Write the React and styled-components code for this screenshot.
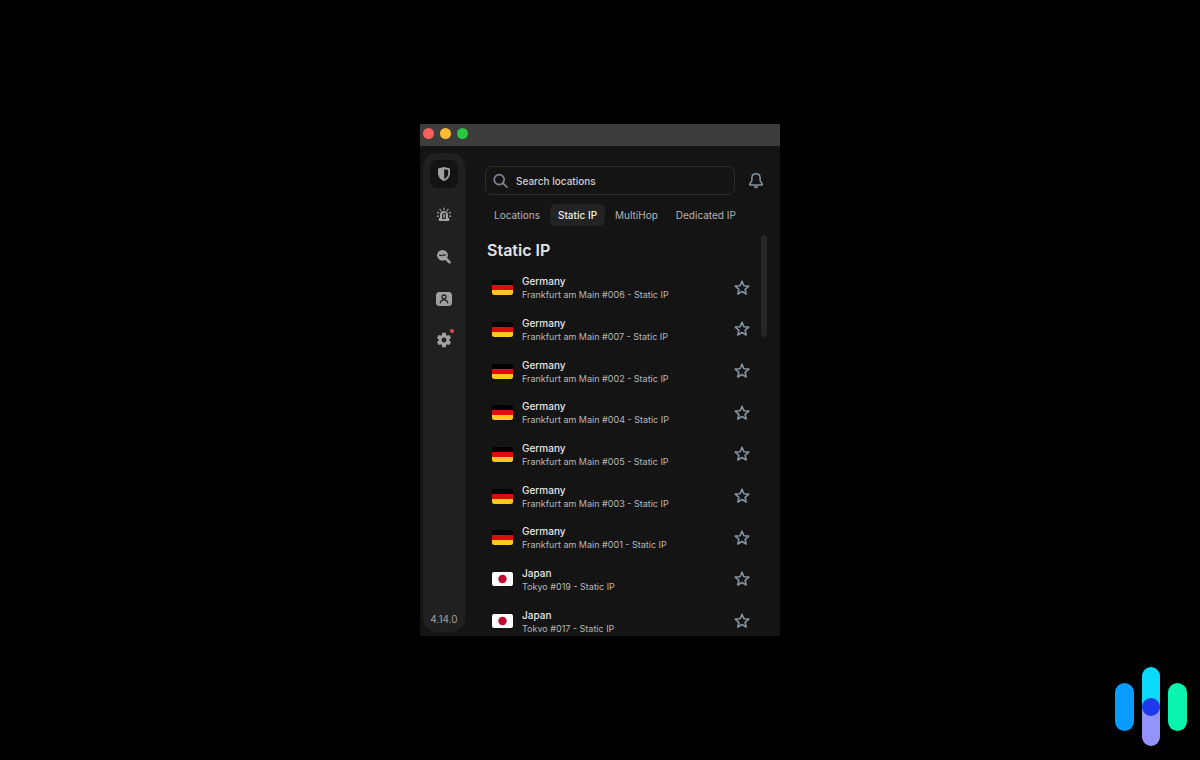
import React from "react";
import styled, { createGlobalStyle } from "styled-components";

const GlobalStyle = createGlobalStyle`
  *, *::before, *::after { box-sizing: border-box; }
  body {
    margin: 0;
    background: #000;
    color: #e4e4e7;
    font-family: Inter, "Liberation Sans", sans-serif;
    font-size: 10px;
  }
  button, input { font: inherit; color: inherit; }
  button { border: 0; padding: 0; background: none; cursor: pointer; }
`;

const Page = styled.div`
  display: grid;
  place-items: center;
  min-height: 100vh;
`;

const AppWindow = styled.div`
  display: flex;
  flex-direction: column;
  width: min(360px, 100%);
  height: min(512px, 100vh);
  background: #141414;
  overflow: hidden;
`;

const TitleBar = styled.header`
  display: flex;
  flex: none;
  gap: 6px;
  height: 22px;
  padding: 4px 3px;
  background: #3d3d3b;
`;

const WindowControl = styled.button`
  width: 11px;
  height: 11px;
  border-radius: 50%;
  background: ${(p) => p.$color};
`;

const Body = styled.div`
  display: flex;
  flex: 1;
  min-height: 0;
  padding-left: 3px;
`;

const Sidebar = styled.aside`
  display: flex;
  flex-direction: column;
  justify-content: space-between;
  align-items: center;
  width: 42px;
  margin: 7px 0 4px;
  border-radius: 14px;
  background: #202020;
`;

const SideNav = styled.nav`
  display: grid;
  grid-auto-rows: 1fr;
  place-items: center;
  height: 208px;
`;

const SideButton = styled.button`
  position: relative;
  display: grid;
  place-items: center;
  width: 28px;
  height: 28px;
  border-radius: 7px;
  background: ${(p) => (p.$active ? "#131313" : "transparent")};
  color: #a1a1a1;
`;

const Dot = styled.span`
  position: absolute;
  top: 3px;
  right: 4px;
  width: 4px;
  height: 4px;
  border-radius: 50%;
  background: #e5484d;
`;

const Version = styled.span`
  color: #a0a0a0;
  line-height: 14px;
  padding-bottom: 6px;
`;

const Main = styled.main`
  position: relative;
  display: flex;
  flex: 1;
  flex-direction: column;
  min-width: 0;
  padding: 20px 15px 4px 20px;
`;

const SearchRow = styled.div`
  display: flex;
  gap: 12px;
  align-items: center;
`;

const SearchBox = styled.label`
  display: flex;
  flex: 1;
  align-items: center;
  gap: 8px;
  height: 29px;
  padding: 0 7px;
  border: 1px solid #2b2b2b;
  border-radius: 7px;
  color: #84868f;
`;

const SearchInput = styled.input`
  flex: 1;
  min-width: 0;
  padding: 0;
  border: 0;
  outline: 0;
  background: none;
  font-weight: 500;
  &::placeholder { color: #cfcfcf; opacity: 1; }
`;

const IconButton = styled.button`
  display: grid;
  place-items: center;
  width: 18px;
  height: 18px;
  color: #8394a0;
`;

const Tabs = styled.div`
  display: flex;
  gap: 2px;
  margin: 9px 0 0 1px;
`;

const Tab = styled.button`
  height: 22px;
  padding: 0 8px;
  border-radius: 6px;
  white-space: nowrap;
  background: ${(p) => (p.$active ? "#232323" : "transparent")};
  color: ${(p) => (p.$active ? "#ededed" : "#b4b4b4")};
  font-weight: ${(p) => (p.$active ? 500 : 400)};
`;

const ScrollArea = styled.section`
  flex: 1;
  min-height: 0;
  margin-top: 9px;
  overflow: hidden;
`;

const Title = styled.h1`
  margin: 0;
  padding: 2px 2px 0;
  font-size: 16px;
  line-height: 26px;
  font-weight: 600;
`;

const List = styled.ul`
  display: grid;
  grid-auto-rows: 1fr;
  height: 375px;
  margin: 4px 0 0;
  padding: 0 14px 0 7px;
  list-style: none;
`;

const Row = styled.li`
  display: flex;
  align-items: center;
  gap: 9px;
`;

const Place = styled.div`
  flex: 1;
  min-width: 0;
  white-space: nowrap;
`;

const Country = styled.div`
  font-size: 10px;
  line-height: 14px;
  font-weight: 500;
`;

const City = styled.div`
  font-size: 9px;
  line-height: 13px;
  color: #b8b8b8;
`;

const ScrollThumb = styled.div`
  position: absolute;
  top: 89px;
  right: 13px;
  width: 6px;
  height: 102px;
  border-radius: 3px;
  background: #262626;
`;

const Logo = styled.svg`
  position: fixed;
  right: 13px;
  bottom: 13px;
`;

const ShieldIcon = () => (
  <svg width="14" height="16" viewBox="0 0 14 16" aria-hidden="true">
    <path d="M7 1 L13 2.6 V7 C13 11 10.6 13.6 7 15 C3.400 13.600 1 11 1 7 V2.600 Z" fill="currentColor" />
    <path d="M7.200 3.200 L11.200 4.100 V7 C11.200 9.800 9.900 11.700 7.200 13 Z" fill="#131313" />
  </svg>
);

const AlertIcon = () => (
  <svg width="16" height="16" viewBox="0 0 16 16" aria-hidden="true">
    <path d="M4 11 V8 a4 4 0 0 1 8 0 v3 h0.300 a1 1 0 0 1 1 1 v1 a1 1 0 0 1 -1 1 H3.700 a1 1 0 0 1 -1 -1 v-1 a1 1 0 0 1 1 -1 Z" fill="currentColor" />
    <path d="M9.200 6.300 H8.300 A1.700 1.700 0 0 0 6.600 8 V11.400 H9.200 Z" fill="none" stroke="#202020" strokeWidth="1.100" />
    <path d="M8 1.200 V2.600 M4 2.500 L4.800 3.700 M12 2.500 L11.200 3.700 M1.500 5.500 L2.700 6.100 M14.500 5.500 L13.300 6.100 M1.200 9.200 H2.500 M14.800 9.200 H13.500" stroke="currentColor" strokeWidth="1.200" strokeLinecap="round" />
  </svg>
);

const ScanIcon = () => (
  <svg width="16" height="16" viewBox="0 0 16 16" aria-hidden="true">
    <circle cx="6.500" cy="6.300" r="5.400" fill="currentColor" />
    <path d="M10 9.800 L13.600 13.300" stroke="currentColor" strokeWidth="2.600" strokeLinecap="round" />
    <path d="M3.600 6.100 Q5 6.900 6.500 6.200 T9.400 6.100" stroke="#202020" strokeWidth="1.200" fill="none" strokeLinecap="round" />
  </svg>
);

const AccountIcon = () => (
  <svg width="18" height="16" viewBox="0 0 18 16" aria-hidden="true">
    <rect x="1" y="1" width="16" height="14" rx="3.500" fill="currentColor" />
    <circle cx="9" cy="6" r="2" fill="none" stroke="#202020" strokeWidth="1.300" />
    <path d="M5.200 11.800 C5.700 9.800 7 8.900 9 8.900 S12.300 9.800 12.800 11.800" fill="none" stroke="#202020" strokeWidth="1.300" strokeLinecap="round" />
  </svg>
);

const GearIcon = () => (
  <svg width="18" height="18" viewBox="0 0 24 24" aria-hidden="true">
    <path
      fill="currentColor"
      d="M19.140 12.940c.04-.3.06-.61.06-.94 0-.32-.02-.64-.07-.94l2.030-1.580c.18-.14.23-.41.12-.61l-1.920-3.320c-.12-.22-.37-.29-.59-.22l-2.390.96c-.5-.38-1.030-.7-1.620-.94l-.36-2.540c-.04-.24-.24-.41-.48-.41h-3.840c-.24 0-.43.17-.47.41l-.36 2.540c-.59.24-1.130.57-1.620.94l-2.390-.96c-.22-.08-.47 0-.59.22L2.740 8.870c-.12.21-.08.47.12.61l2.030 1.580c-.05.3-.09.63-.09.94s.02.64.07.94l-2.030 1.580c-.18.14-.23.41-.12.61l1.920 3.320c.12.22.37.29.59.22l2.390-.96c.5.38 1.030.7 1.620.94l.36 2.540c.05.24.24.41.48.41h3.840c.24 0 .44-.17.47-.41l.36-2.540c.59-.24 1.130-.56 1.620-.94l2.390.96c.22.08.47 0 .59-.22l1.920-3.320c.12-.22.07-.47-.12-.61l-2.010-1.580zM12 15.200c-1.770 0-3.200-1.430-3.200-3.200s1.430-3.200 3.200-3.200 3.200 1.430 3.200 3.200-1.430 3.200-3.200 3.200z"
    />
  </svg>
);

const SearchIcon = () => (
  <svg width="15" height="16" viewBox="0 0 15 16" fill="none" stroke="currentColor" strokeWidth="1.600" strokeLinecap="round" aria-hidden="true">
    <circle cx="6.200" cy="6.600" r="5" />
    <path d="M10 10.400 L14 14.200" />
  </svg>
);

const BellIcon = () => (
  <svg width="16" height="18" viewBox="0 0 16 18" aria-hidden="true">
    <path d="M8 1.700 C5.300 1.700 3.900 3.600 3.900 6 V8.300 C3.900 9.600 2 11 1.700 12.200 C1.600 12.700 1.900 13.100 2.400 13.100 H13.600 C14.100 13.100 14.400 12.700 14.300 12.200 C14 11 12.100 9.600 12.100 8.300 V6 C12.100 3.600 10.700 1.700 8 1.700 Z" fill="none" stroke="currentColor" strokeWidth="1.500" />
    <path d="M5.800 14.300 H10.200 A2.200 2 0 0 1 5.800 14.300 Z" fill="currentColor" />
  </svg>
);

const StarIcon = () => (
  <svg width="16" height="16" viewBox="0 0 16 16" fill="none" stroke="currentColor" strokeWidth="1.600" strokeLinejoin="round" aria-hidden="true">
    <path d="M8 1.200 L9.900 5.700 L14.800 6.100 L11.100 9.300 L12.200 14 L8 11.500 L3.800 14 L4.900 9.300 L1.200 6.100 L6.100 5.700 Z" />
  </svg>
);

const Flag = ({ country }) =>
  country === "Germany" ? (
    <svg width="21" height="15" viewBox="0 0 21 15" role="img" aria-label="Germany">
      <clipPath id="flag-shape"><rect width="21" height="15" rx="2.500" /></clipPath>
      <g clipPath="url(#flag-shape)">
        <rect width="21" height="5" fill="#000" />
        <rect y="5" width="21" height="5" fill="#d80f0c" />
        <rect y="10" width="21" height="5" fill="#fcc91c" />
      </g>
    </svg>
  ) : (
    <svg width="21" height="15" viewBox="0 0 21 15" role="img" aria-label="Japan">
      <rect width="21" height="14" rx="2" fill="#fff" />
      <circle cx="10.500" cy="7" r="4.200" fill="#c00a30" />
    </svg>
  );

const navItems = [
  { label: "VPN", Icon: ShieldIcon, active: true },
  { label: "Alert", Icon: AlertIcon },
  { label: "Search", Icon: ScanIcon },
  { label: "Account", Icon: AccountIcon },
  { label: "Settings", Icon: GearIcon, badge: true },
];

const tabs = ["Locations", "Static IP", "MultiHop", "Dedicated IP"];

const servers = [
  ...["006", "007", "002", "004", "005", "003", "001"].map((id) => ({
    country: "Germany",
    city: `Frankfurt am Main #${id} - Static IP`,
  })),
  ...["019", "017"].map((id) => ({ country: "Japan", city: `Tokyo #${id} - Static IP` })),
];

export default function App() {
  return (
    <Page>
      <GlobalStyle />
      <AppWindow>
        <TitleBar>
          <WindowControl $color="#fc605c" aria-label="Close" />
          <WindowControl $color="#fdbc30" aria-label="Minimize" />
          <WindowControl $color="#28c840" aria-label="Zoom" />
        </TitleBar>
        <Body>
          <Sidebar>
            <SideNav>
              {navItems.map(({ label, Icon, active, badge }) => (
                <SideButton key={label} $active={active} aria-label={label}>
                  <Icon />
                  {badge && <Dot />}
                </SideButton>
              ))}
            </SideNav>
            <Version>4.14.0</Version>
          </Sidebar>
          <Main>
            <SearchRow>
              <SearchBox>
                <SearchIcon />
                <SearchInput placeholder="Search locations" aria-label="Search locations" />
              </SearchBox>
              <IconButton aria-label="Notifications"><BellIcon /></IconButton>
            </SearchRow>
            <Tabs role="tablist">
              {tabs.map((t) => (
                <Tab key={t} role="tab" aria-selected={t === "Static IP"} $active={t === "Static IP"}>
                  {t}
                </Tab>
              ))}
            </Tabs>
            <ScrollArea>
              <Title>Static IP</Title>
              <List>
                {servers.map((s) => (
                  <Row key={s.city}>
                    <Flag country={s.country} />
                    <Place>
                      <Country>{s.country}</Country>
                      <City>{s.city}</City>
                    </Place>
                    <IconButton aria-label={`Add ${s.city} to favourites`}><StarIcon /></IconButton>
                  </Row>
                ))}
              </List>
            </ScrollArea>
            <ScrollThumb />
          </Main>
        </Body>
      </AppWindow>
      <Logo width="72" height="80" viewBox="0 0 72 80" role="img" aria-label="Logo">
        <rect x="0" y="16" width="19" height="48" rx="9.500" fill="#0a9bff" />
        <path d="M27 40 V9 a9 9 0 0 1 18 0 V40 Z" fill="#0bd9fb" />
        <path d="M27 40 V70 a9 9 0 0 0 18 0 V40 Z" fill="#9393fb" />
        <circle cx="36" cy="40" r="9" fill="#1c39ea" />
        <rect x="53" y="16" width="19" height="48" rx="9.500" fill="#09f5ae" />
      </Logo>
    </Page>
  );
}
